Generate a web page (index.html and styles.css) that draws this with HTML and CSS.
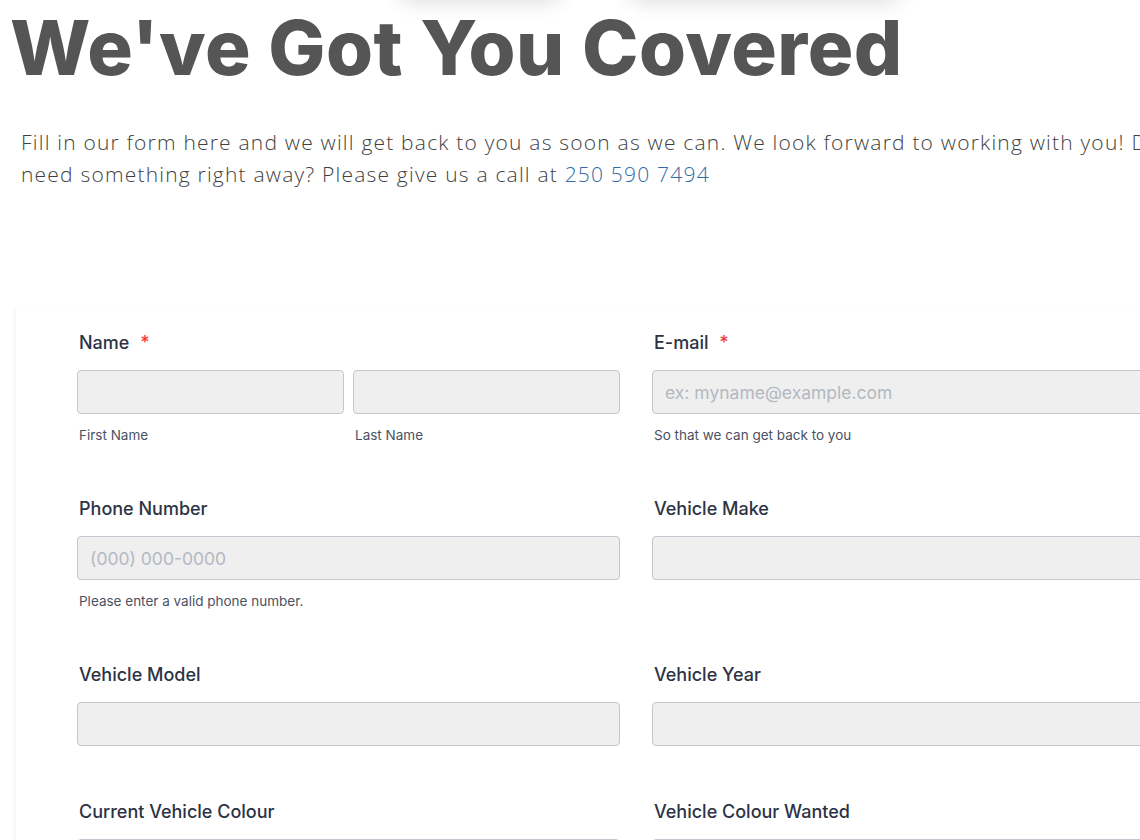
FILE: index.html
```html
<!DOCTYPE html>
<html lang="en">
<head>
<meta charset="utf-8">
<title>We've Got You Covered</title>
<link rel="stylesheet" href="styles.css">
</head>
<body>
<div class="page">
  <div class="top-shadows" aria-hidden="true">
    <span class="blob blob-a"></span>
    <span class="blob blob-b"></span>
  </div>
  <header class="intro">
    <h1 class="title">We've Got You Covered</h1>
    <p class="lead">Fill in our form here and we will get back to you as soon as we can. We look forward to working with you! Don't need something right away? Please give us a call at <a href="#" class="phone">250 590 7494</a></p>
  </header>

  <form class="card">
    <div class="row">
      <div class="field">
        <label class="label">Name <span class="req">*</span></label>
        <div class="pair">
          <div class="sub">
            <input class="input" type="text">
            <span class="hint">First Name</span>
          </div>
          <div class="sub">
            <input class="input" type="text">
            <span class="hint">Last Name</span>
          </div>
        </div>
      </div>
      <div class="field">
        <label class="label">E-mail <span class="req">*</span></label>
        <input class="input" type="email" placeholder="ex: myname@example.com">
        <span class="hint">So that we can get back to you</span>
      </div>
    </div>

    <div class="row">
      <div class="field">
        <label class="label">Phone Number</label>
        <input class="input" type="tel" placeholder="(000) 000-0000">
        <span class="hint">Please enter a valid phone number.</span>
      </div>
      <div class="field">
        <label class="label">Vehicle Make</label>
        <input class="input" type="text">
      </div>
    </div>

    <div class="row">
      <div class="field">
        <label class="label">Vehicle Model</label>
        <input class="input" type="text">
      </div>
      <div class="field">
        <label class="label">Vehicle Year</label>
        <input class="input" type="text">
      </div>
    </div>

    <div class="row">
      <div class="field">
        <label class="label">Current Vehicle Colour</label>
        <input class="input" type="text">
      </div>
      <div class="field">
        <label class="label">Vehicle Colour Wanted</label>
        <input class="input" type="text">
      </div>
    </div>
  </form>
</div>
</body>
</html>
```

FILE: styles.css
```css
html, body {
  margin: 0;
  padding: 0;
  background: #ffffff;
  overflow: hidden;
}

.page {
  position: relative;
  width: 1140px;
  height: 840px;
  overflow: hidden;
}

.top-shadows {
  position: absolute;
  top: -44px;
  left: 0;
  width: 100%;
  height: 44px;
}

.blob {
  position: absolute;
  top: 0;
  height: 44px;
  border-radius: 30px;
  background: #fff;
  box-shadow: 0 3px 20px rgba(0, 0, 0, 0.13);
}

.blob-a {
  left: 395px;
  width: 170px;
}

.blob-b {
  left: 625px;
  width: 280px;
}

.intro {
  padding: 0;
}

.title {
  margin: 0;
  padding: 9px 0 0 10px;
  font-family: Inter, "Noto Sans", sans-serif;
  font-weight: 800;
  font-size: 76px;
  line-height: 76px;
  letter-spacing: 0.5px;
  color: #555555;
}

.lead {
  margin: 41px 0 0 21px;
  width: 1182px;
  font-family: "Open Sans", "Noto Sans", sans-serif;
  font-weight: 300;
  font-size: 21px;
  line-height: 32px;
  color: #3f3f3f;
  letter-spacing: 1.2px;
}

.phone {
  color: #2f6aa3;
  text-decoration: none;
}

.card {
  margin: 116px 0 0 16px;
  width: 1240px;
  padding: 25px 0 40px 61px;
  box-sizing: border-box;
  background: #fff;
  box-shadow: 0 3px 6px rgba(0, 0, 0, 0.08);
  display: flex;
  flex-direction: column;
  gap: 54px;
  font-family: Inter, "Noto Sans", sans-serif;
}

.row {
  display: grid;
  grid-template-columns: 543px 543px;
  column-gap: 32px;
  align-items: start;
}

.field {
  display: flex;
  flex-direction: column;
}

.label {
  font-size: 18px;
  line-height: 24px;
  font-weight: 500;
  color: #2c3345;
  margin: 0 0 15px 2px;
}

.req {
  color: #f23a3c;
  margin-left: 6px;
}

.pair {
  display: grid;
  grid-template-columns: 1fr 1fr;
  column-gap: 9px;
}

.sub {
  display: flex;
  flex-direction: column;
}

.input {
  box-sizing: border-box;
  height: 44px;
  width: 100%;
  margin: 0;
  padding: 0 12px;
  border: 1px solid #c3c6ce;
  border-radius: 4px;
  background: #efefef;
  font-family: Inter, "Noto Sans", sans-serif;
  font-size: 17.5px;
  color: #2c3345;
}

.input::placeholder {
  color: #b4b8c1;
}

.hint {
  margin: 13px 0 0 2px;
  font-size: 13.5px;
  line-height: 16px;
  color: #4b5263;
}
```
